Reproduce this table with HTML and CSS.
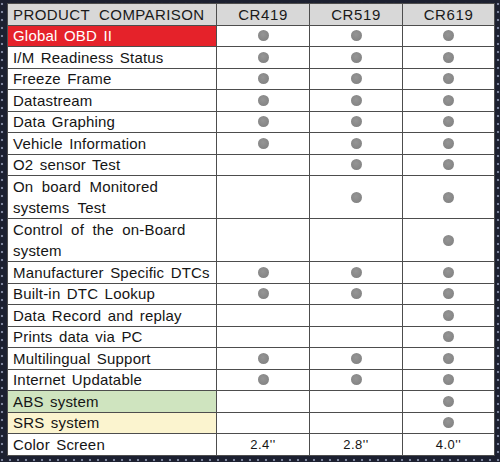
FILE: index.html
```html
<!DOCTYPE html>
<html>
<head>
<meta charset="utf-8">
<link rel="stylesheet" href="styles.css">
</head>
<body>
<div class="page">
  <div class="grid">
    <div class="cell head name">PRODUCT&nbsp; COMPARISON</div>
    <div class="cell head">CR419</div>
    <div class="cell head">CR519</div>
    <div class="cell head">CR619</div>

    <div class="cell name red">Global OBD II</div>
    <div class="cell"><span class="dot"></span></div>
    <div class="cell"><span class="dot"></span></div>
    <div class="cell"><span class="dot"></span></div>

    <div class="cell name">I/M Readiness Status</div>
    <div class="cell"><span class="dot"></span></div>
    <div class="cell"><span class="dot"></span></div>
    <div class="cell"><span class="dot"></span></div>

    <div class="cell name">Freeze Frame</div>
    <div class="cell"><span class="dot"></span></div>
    <div class="cell"><span class="dot"></span></div>
    <div class="cell"><span class="dot"></span></div>

    <div class="cell name">Datastream</div>
    <div class="cell"><span class="dot"></span></div>
    <div class="cell"><span class="dot"></span></div>
    <div class="cell"><span class="dot"></span></div>

    <div class="cell name">Data Graphing</div>
    <div class="cell"><span class="dot"></span></div>
    <div class="cell"><span class="dot"></span></div>
    <div class="cell"><span class="dot"></span></div>

    <div class="cell name">Vehicle Information</div>
    <div class="cell"><span class="dot"></span></div>
    <div class="cell"><span class="dot"></span></div>
    <div class="cell"><span class="dot"></span></div>

    <div class="cell name">O2 sensor Test</div>
    <div class="cell"></div>
    <div class="cell"><span class="dot"></span></div>
    <div class="cell"><span class="dot"></span></div>

    <div class="cell name tall">On board Monitored<br>systems Test</div>
    <div class="cell tall"></div>
    <div class="cell tall"><span class="dot"></span></div>
    <div class="cell tall"><span class="dot"></span></div>

    <div class="cell name tall">Control of the on-Board<br>system</div>
    <div class="cell tall"></div>
    <div class="cell tall"></div>
    <div class="cell tall"><span class="dot"></span></div>

    <div class="cell name">Manufacturer Specific DTCs</div>
    <div class="cell"><span class="dot"></span></div>
    <div class="cell"><span class="dot"></span></div>
    <div class="cell"><span class="dot"></span></div>

    <div class="cell name">Built-in DTC Lookup</div>
    <div class="cell"><span class="dot"></span></div>
    <div class="cell"><span class="dot"></span></div>
    <div class="cell"><span class="dot"></span></div>

    <div class="cell name">Data Record and replay</div>
    <div class="cell"></div>
    <div class="cell"></div>
    <div class="cell"><span class="dot"></span></div>

    <div class="cell name">Prints data via PC</div>
    <div class="cell"></div>
    <div class="cell"></div>
    <div class="cell"><span class="dot"></span></div>

    <div class="cell name">Multilingual Support</div>
    <div class="cell"><span class="dot"></span></div>
    <div class="cell"><span class="dot"></span></div>
    <div class="cell"><span class="dot"></span></div>

    <div class="cell name">Internet Updatable</div>
    <div class="cell"><span class="dot"></span></div>
    <div class="cell"><span class="dot"></span></div>
    <div class="cell"><span class="dot"></span></div>

    <div class="cell name green">ABS system</div>
    <div class="cell"></div>
    <div class="cell"></div>
    <div class="cell"><span class="dot"></span></div>

    <div class="cell name yellow">SRS system</div>
    <div class="cell"></div>
    <div class="cell"></div>
    <div class="cell"><span class="dot"></span></div>

    <div class="cell name">Color Screen</div>
    <div class="cell size">2.4''</div>
    <div class="cell size">2.8''</div>
    <div class="cell size">4.0''</div>
  </div>
</div>
</body>
</html>
```
FILE: styles.css
```css
html, body {
  margin: 0;
  padding: 0;
}
body {
  width: 500px;
  height: 462px;
  overflow: hidden;
  background-color: #1c2030;
  background-image: radial-gradient(circle, #7d849c 0.9px, transparent 1.6px);
  background-size: 8px 8px;
  background-position: -2px 0;
  font-family: "Liberation Sans", Arial, sans-serif;
}
.page {
  padding: 3px 5px 0 7px;
}
.grid {
  display: grid;
  grid-template-columns: 208px 92px 92px 91px;
  grid-auto-rows: 20.5px;
  gap: 1px;
  background: #4d4d4d;
  border: 1px solid #4d4d4d;
  width: 486px;
}
.cell {
  background: #fff;
  display: flex;
  align-items: center;
  justify-content: center;
  font-size: 14px;
  color: #151515;
  letter-spacing: 0.3px;
  white-space: nowrap;
}
.cell.name {
  justify-content: flex-start;
  padding-left: 5px;
  font-size: 15px;
  letter-spacing: 0.2px;
  word-spacing: 2px;
  line-height: 21px;
}
.cell.head {
  background: #d8d8d8;
  font-size: 15px;
  height: 21px;
  letter-spacing: 0.6px;
  color: #1a1a1a;
}
.cell.head.name {
  font-size: 15px;
  letter-spacing: 0.4px;
  word-spacing: 0;
}
.cell.tall {
  grid-row: span 2;
}
.cell.tall.name {
  align-items: center;
  line-height: 21px;
  word-spacing: 4px;
}
.cell.red {
  background: #e5222a;
  color: #fff;
}
.cell.green {
  background: #cfe4bf;
}
.cell.yellow {
  background: #fbf4cf;
}
.cell.size {
  font-size: 13px;
  letter-spacing: 0.5px;
}
.dot {
  width: 11px;
  height: 11px;
  border-radius: 50%;
  background: radial-gradient(circle at 45% 40%, #959595, #7e7e7e);
}
```
